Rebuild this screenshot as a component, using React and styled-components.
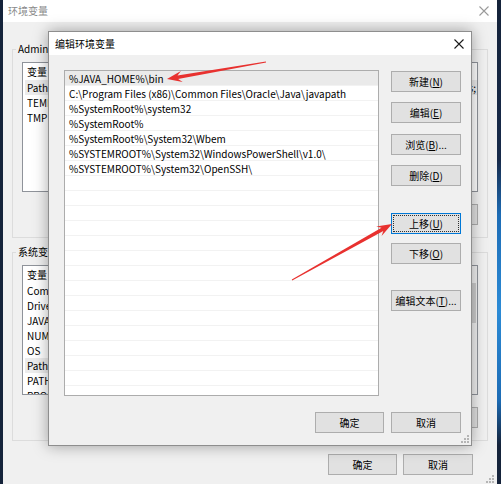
import React from "react";
import styled, { createGlobalStyle, css } from "styled-components";

const FONT = `"Noto Sans CJK SC", "Noto Sans", sans-serif`;

const GlobalStyle = createGlobalStyle`
  html, body { margin: 0; padding: 0; background: #15233a; }
  body { font-family: ${FONT}; font-size: 10px; color: #000; }
  * { box-sizing: border-box; }
`;

const Desktop = styled.div`
  position: relative;
  width: 501px;
  height: 484px;
  overflow: hidden;
  background:
    linear-gradient(to right, #15233a 0 3px, transparent 3px),
    linear-gradient(to bottom, #15233a 0, #172a4a 160px, #1d6cb5 215px, #2c8bd6 310px, #1d6cb5 400px, #15233a 445px, #15233a 100%);
`;

const Window = styled.div`
  position: absolute;
  left: ${(p) => p.$x}px;
  top: ${(p) => p.$y}px;
  width: ${(p) => p.$w}px;
  height: ${(p) => p.$h}px;
  background: #f0f0f0;
  display: flex;
  flex-direction: column;
  ${(p) =>
    p.$active &&
    css`
      border: 1px solid #8e8e8e;
      box-shadow: 0 0 14px rgba(0, 0, 0, 0.35);
    `}
`;

const TitleBar = styled.div`
  flex: none;
  height: ${(p) => p.$h}px;
  background: #fff;
  display: flex;
  align-items: center;
  justify-content: space-between;
  padding: 0 ${(p) => p.$pr}px 0 ${(p) => p.$pl}px;
`;

const TitleText = styled.span`
  font-size: 10px;
  color: ${(p) => (p.$active ? "#000" : "#8a8a8a")};
  line-height: 1;
`;

const CloseIcon = ({ color }) => (
  <svg width="10" height="10" viewBox="0 0 10 10">
    <path d="M0.5 0.5 L9.5 9.5 M9.5 0.5 L0.5 9.5" stroke={color} strokeWidth="1.1" fill="none" />
  </svg>
);

/* ---------- outer window ---------- */

const OuterBody = styled.div`
  flex: 1;
  padding: 19px 9px 0 9px;
  display: flex;
  flex-direction: column;
`;

const Group = styled.fieldset`
  margin: ${(p) => p.$mt || 0}px 0 0 0;
  padding: 5px 9px 12px 9px;
  border: 1px solid #dcdcdc;
  min-width: 0;
`;

const GroupLabel = styled.legend`
  font-size: 10px;
  line-height: 16px;
  padding: 0 2px;
  margin-left: -6px;
  color: #000;
`;

const ListView = styled.div`
  height: 130px;
  background: #fff;
  border: 1px solid #8f939a;
  display: flex;
  overflow: hidden;
`;

const ListColumns = styled.div`
  flex: 1;
  min-width: 0;
  display: flex;
  flex-direction: column;
`;

const ListHeader = styled.div`
  height: 17px;
  display: grid;
  grid-template-columns: 150px 1fr;
  align-items: center;
  padding-left: 4px;
  line-height: 17px;
`;

const ListRow = styled.div`
  height: 15px;
  line-height: 15px;
  display: grid;
  grid-template-columns: 150px 1fr;
  padding-left: 2px;
  margin-left: 2px;
  white-space: nowrap;
  background: ${(p) => (p.$selected ? "#ececec" : "transparent")};
`;

const Cell = styled.span`
  overflow: hidden;
`;

const Scrollbar = styled.div`
  flex: none;
  width: 17px;
  background: #f0f0f0;
  display: flex;
  flex-direction: column;
`;

const ScrollArrow = styled.div`
  height: 17px;
  display: flex;
  align-items: center;
  justify-content: center;
`;

const ScrollTrack = styled.div`
  flex: 1;
`;

const ScrollThumb = styled.div`
  height: 40px;
  margin: 0 1px;
  background: #cdcdcd;
`;

const ButtonRow = styled.div`
  display: flex;
  justify-content: flex-end;
  gap: ${(p) => p.$gap}px;
  margin-top: ${(p) => p.$mt}px;
  margin-right: ${(p) => p.$mr || 0}px;
`;

const Button = styled.button`
  flex: none;
  width: ${(p) => p.$w}px;
  height: 21px;
  margin-top: ${(p) => p.$mt || 0}px;
  padding: 0;
  background: #e1e1e1;
  border: 1px solid #adadad;
  font-family: ${FONT};
  font-size: 10px;
  color: #000;
  line-height: 19px;
  text-align: center;
  white-space: nowrap;
  ${(p) =>
    p.$focused &&
    css`
      border-color: #0078d7;
      outline: 1px dotted #303030;
      outline-offset: -3px;
    `}
  u {
    text-decoration: underline;
    text-underline-offset: 1px;
  }
`;

const Grip = styled.div`
  position: absolute;
  right: ${(p) => p.$r}px;
  bottom: ${(p) => p.$b}px;
  width: 8px;
  height: 8px;
  line-height: 0;
`;

const GripIcon = () => (
  <svg width="8" height="8" viewBox="0 0 8 8">
    {[
      [6, 0],
      [6, 3],
      [3, 3],
      [6, 6],
      [3, 6],
      [0, 6],
    ].map(([x, y], i) => (
      <rect key={i} x={x} y={y} width="2" height="2" fill="#b5b5b5" />
    ))}
  </svg>
);

/* ---------- dialog ---------- */

const DialogBody = styled.div`
  flex: 1;
  padding: 15px 10px 0 15px;
  display: flex;
  flex-direction: column;
`;

const DialogMain = styled.div`
  display: flex;
  gap: 12px;
`;

const PathList = styled.div`
  width: 315px;
  height: 326px;
  background: #fff;
  border: 1px solid #acacac;
  overflow: hidden;
`;

const PathRow = styled.div`
  height: 15px;
  line-height: 15px;
  padding-left: 4px;
  border-bottom: 1px solid #f2f2f2;
  white-space: nowrap;
  background: ${(p) => (p.$selected ? "#eaeaea" : "#fff")};
`;

const ButtonColumn = styled.div`
  display: flex;
  flex-direction: column;
`;

const ArrowLayer = styled.svg`
  position: absolute;
  left: 0;
  top: 0;
  pointer-events: none;
`;

function arrowPoints(tail, tip, headLen = 15, headHalf = 5.5, tailHalf = 0.5, neckHalf = 1.8) {
  const [tx, ty] = tail;
  const [hx, hy] = tip;
  const dx = hx - tx;
  const dy = hy - ty;
  const len = Math.hypot(dx, dy);
  const ux = dx / len;
  const uy = dy / len;
  const nx = -uy;
  const ny = ux;
  const neck = [hx - ux * (headLen - 4), hy - uy * (headLen - 4)];
  const base = [hx - ux * headLen, hy - uy * headLen];
  const pts = [
    [tx + nx * tailHalf, ty + ny * tailHalf],
    [neck[0] + nx * neckHalf, neck[1] + ny * neckHalf],
    [base[0] + nx * headHalf, base[1] + ny * headHalf],
    [hx, hy],
    [base[0] - nx * headHalf, base[1] - ny * headHalf],
    [neck[0] - nx * neckHalf, neck[1] - ny * neckHalf],
    [tx - nx * tailHalf, ty - ny * tailHalf],
  ];
  return pts.map((p) => p.map((v) => v.toFixed(1)).join(",")).join(" ");
}

const userVars = [
  ["Path", "C:\\Users\\Administrator\\AppData\\Local\\Microsoft\\WindowsApps;", true],
  ["TEMP", "C:\\Users\\Administrator\\AppData\\Local\\Temp"],
  ["TMP", "C:\\Users\\Administrator\\AppData\\Local\\Temp"],
];

const systemVars = [
  ["ComSpec", "C:\\Windows\\system32\\cmd.exe"],
  ["DriverData", "C:\\Windows\\System32\\Drivers\\DriverData"],
  ["JAVA_HOME", "C:\\Program Files\\Java\\jdk1.8.0_201"],
  ["NUMBER_OF_PROCESSORS", "4"],
  ["OS", "Windows_NT"],
  ["Path", "%JAVA_HOME%\\bin;C:\\Program Files (x86)\\Common Files\\Oracle\\Java\\javapath", true],
  ["PATHEXT", ".COM;.EXE;.BAT;.CMD;.VBS;.VBE;.JS;.JSE;.WSF;.WSH;.MSC"],
  ["PROCESSOR_ARCHITECTURE", "AMD64"],
];

const paths = [
  "%JAVA_HOME%\\bin",
  "C:\\Program Files (x86)\\Common Files\\Oracle\\Java\\javapath",
  "%SystemRoot%\\system32",
  "%SystemRoot%",
  "%SystemRoot%\\System32\\Wbem",
  "%SYSTEMROOT%\\System32\\WindowsPowerShell\\v1.0\\",
  "%SYSTEMROOT%\\System32\\OpenSSH\\",
];

const Key = ({ k }) => (
  <>
    (<u>{k}</u>)
  </>
);

function VarList({ rows, scroll }) {
  return (
    <ListView>
      <ListColumns>
        <ListHeader>
          <span>变量</span>
          <span>值</span>
        </ListHeader>
        {rows.map(([name, value, sel]) => (
          <ListRow key={name} $selected={sel}>
            <Cell>{name}</Cell>
            <Cell>{value}</Cell>
          </ListRow>
        ))}
      </ListColumns>
      {scroll && (
        <Scrollbar>
          <ScrollArrow>
            <svg width="7" height="4" viewBox="0 0 7 4">
              <path d="M0 4 L3.5 0 L7 4 Z" fill="#606060" />
            </svg>
          </ScrollArrow>
          <ScrollTrack>
            <ScrollThumb />
          </ScrollTrack>
          <ScrollArrow>
            <svg width="7" height="4" viewBox="0 0 7 4">
              <path d="M0 0 L3.5 4 L7 0 Z" fill="#606060" />
            </svg>
          </ScrollArrow>
        </Scrollbar>
      )}
    </ListView>
  );
}

export default function App() {
  const emptyRows = Array.from({ length: 16 });
  return (
    <Desktop>
      <GlobalStyle />
      <Window $x={3} $y={0} $w={494} $h={484}>
        <TitleBar $h={22} $pl={5} $pr={8}>
          <TitleText>环境变量</TitleText>
          <CloseIcon color="#9a9a9a" />
        </TitleBar>
        <OuterBody>
          <Group>
            <GroupLabel>Administrator 的用户变量</GroupLabel>
            <VarList rows={userVars} />
            <ButtonRow $gap={6} $mt={12}>
              <Button $w={75}>新建<Key k="N" />...</Button>
              <Button $w={75}>编辑<Key k="E" />...</Button>
              <Button $w={75}>删除<Key k="D" /></Button>
            </ButtonRow>
          </Group>
          <Group $mt={6}>
            <GroupLabel>系统变量</GroupLabel>
            <VarList rows={systemVars} scroll />
            <ButtonRow $gap={6} $mt={12}>
              <Button $w={75}>新建<Key k="W" />...</Button>
              <Button $w={75}>编辑<Key k="I" />...</Button>
              <Button $w={75}>删除<Key k="L" /></Button>
            </ButtonRow>
          </Group>
          <ButtonRow $gap={6} $mt={13} $mr={15}>
            <Button $w={69}>确定</Button>
            <Button $w={70}>取消</Button>
          </ButtonRow>
        </OuterBody>
        <Grip $r={3} $b={1}>
          <GripIcon />
        </Grip>
      </Window>

      <Window $x={48} $y={31} $w={424} $h={415} $active>
        <TitleBar $h={23} $pl={6} $pr={7}>
          <TitleText $active>编辑环境变量</TitleText>
          <CloseIcon color="#1a1a1a" />
        </TitleBar>
        <DialogBody>
          <DialogMain>
            <PathList>
              {paths.map((p, i) => (
                <PathRow key={p} $selected={i === 0}>
                  {p}
                </PathRow>
              ))}
              {emptyRows.map((_, i) => (
                <PathRow key={`e${i}`} />
              ))}
            </PathList>
            <ButtonColumn>
              <Button $w={70} $mt={1}>新建<Key k="N" /></Button>
              <Button $w={70} $mt={10}>编辑<Key k="E" /></Button>
              <Button $w={70} $mt={11}>浏览<Key k="B" />...</Button>
              <Button $w={70} $mt={10}>删除<Key k="D" /></Button>
              <Button $w={70} $mt={27} $focused>上移<Key k="U" /></Button>
              <Button $w={70} $mt={9}>下移<Key k="O" /></Button>
              <Button $w={70} $mt={26}>编辑文本<Key k="T" />...</Button>
            </ButtonColumn>
          </DialogMain>
          <ButtonRow $gap={7} $mt={16}>
            <Button $w={69}>确定</Button>
            <Button $w={70}>取消</Button>
          </ButtonRow>
        </DialogBody>
        <Grip $r={2} $b={2}>
          <GripIcon />
        </Grip>
      </Window>

      <ArrowLayer width="501" height="484" viewBox="0 0 501 484">
        <polygon points={arrowPoints([266, 62], [167, 79])} fill="#e8312f" />
        <polygon points={arrowPoints([292, 280], [392, 224])} fill="#e8312f" />
      </ArrowLayer>
    </Desktop>
  );
}
